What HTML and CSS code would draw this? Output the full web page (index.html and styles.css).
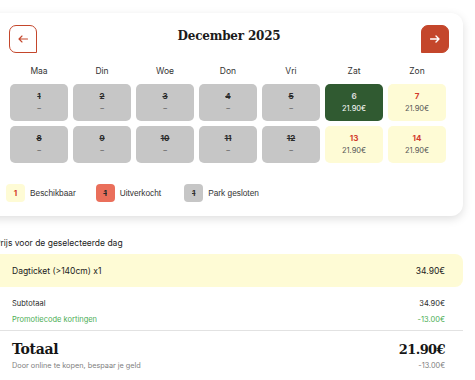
FILE: index.html
```html
<!DOCTYPE html>
<html lang="nl">
<head>
<meta charset="utf-8">
<title>Kalender</title>
<link rel="stylesheet" href="styles.css">
</head>
<body>
<div class="page">
  <section class="card">
    <header class="cal-head">
      <button class="nav prev" aria-label="Vorige maand">
        <svg width="10" height="8" viewBox="0 0 10 8"><path d="M9.5 4H1M4 1L1 4l3 3" fill="none" stroke="currentColor" stroke-width="1.1" stroke-linecap="round" stroke-linejoin="round"/></svg>
      </button>
      <h2 class="month">December 2025</h2>
      <button class="nav next" aria-label="Volgende maand">
        <svg width="10" height="8" viewBox="0 0 10 8"><path d="M0.5 4H9M6 1l3 3-3 3" fill="none" stroke="currentColor" stroke-width="1.4" stroke-linecap="round" stroke-linejoin="round"/></svg>
      </button>
    </header>
    <div class="grid">
      <div class="wd">Maa</div><div class="wd">Din</div><div class="wd">Woe</div><div class="wd">Don</div><div class="wd">Vri</div><div class="wd">Zat</div><div class="wd">Zon</div>
      <div class="day closed"><span class="num">1</span><span class="val">–</span></div>
      <div class="day closed"><span class="num">2</span><span class="val">–</span></div>
      <div class="day closed"><span class="num">3</span><span class="val">–</span></div>
      <div class="day closed"><span class="num">4</span><span class="val">–</span></div>
      <div class="day closed"><span class="num">5</span><span class="val">–</span></div>
      <div class="day selected"><span class="num">6</span><span class="val">21.90€</span></div>
      <div class="day open"><span class="num">7</span><span class="val">21.90€</span></div>
      <div class="day closed"><span class="num">8</span><span class="val">–</span></div>
      <div class="day closed"><span class="num">9</span><span class="val">–</span></div>
      <div class="day closed"><span class="num">10</span><span class="val">–</span></div>
      <div class="day closed"><span class="num">11</span><span class="val">–</span></div>
      <div class="day closed"><span class="num">12</span><span class="val">–</span></div>
      <div class="day open"><span class="num">13</span><span class="val">21.90€</span></div>
      <div class="day open"><span class="num">14</span><span class="val">21.90€</span></div>
    </div>
    <div class="legend">
      <div class="leg leg-1"><span class="sw sw-open">1</span>Beschikbaar</div>
      <div class="leg leg-2"><span class="sw sw-sold">1</span>Uitverkocht</div>
      <div class="leg leg-3"><span class="sw sw-closed">1</span>Park gesloten</div>
    </div>
  </section>

  <section class="price">
    <p class="price-title">Prijs voor de geselecteerde dag</p>
    <div class="ticket-row"><span>Dagticket (&gt;140cm) x1</span><span>34.90€</span></div>
    <div class="sums">
      <div class="sum-row"><span>Subtotaal</span><span>34.90€</span></div>
      <div class="sum-row green"><span>Promotiecode kortingen</span><span>-13.00€</span></div>
    </div>
    <div class="total">
      <div class="total-row"><span>Totaal</span><span class="total-amt">21.90€</span></div>
      <div class="note-row"><span>Door online te kopen, bespaar je geld</span><span>-13.00€</span></div>
    </div>
  </section>
</div>
</body>
</html>
```

FILE: styles.css
```css
* { box-sizing: border-box; }
html, body { margin: 0; padding: 0; background: #ffffff; }
body {
  font-family: "Inter", "Open Sans", sans-serif;
  color: #2a2a2a;
  overflow: hidden;
}
.page {
  margin-left: -24px;
  width: 487px;
  padding-top: 13px;
}
.card {
  background: #fff;
  border-radius: 0 12px 12px 0;
  box-shadow: 0 3px 10px rgba(0,0,0,0.13);
  padding: 12px 14px 14px 33px;
}
.cal-head {
  display: flex;
  align-items: center;
  justify-content: space-between;
  height: 28px;
}
.nav {
  width: 28px;
  height: 28px;
  padding: 0;
  display: flex;
  align-items: center;
  justify-content: center;
  border: 1px solid #c4462b;
  cursor: pointer;
}
.prev {
  background: #fff;
  color: #c4462b;
  border-radius: 7px 7px 0 7px;
}
.next {
  background: #c4462b;
  color: #fff;
  border-radius: 7px 7px 7px 0;
}
.month {
  margin: 0 0 7px;
  font-family: "DejaVu Serif", serif;
  font-weight: 900;
  font-size: 12px;
  letter-spacing: -0.2px;
  color: #1b1b1b;
}
.grid {
  margin-top: 11px;
  display: grid;
  grid-template-columns: repeat(7, 58px);
  grid-template-rows: 15px 37px 37px;
  column-gap: 5px;
  row-gap: 5px;
  margin-left: 1px;
}
.wd {
  text-align: center;
  font-size: 8.5px;
  line-height: 15px;
  color: #333;
}
.day {
  border-radius: 5px;
  display: flex;
  flex-direction: column;
  align-items: center;
  justify-content: center;
  gap: 3px;
}
.num {
  font-size: 8px;
  font-weight: 700;
  line-height: 10px;
}
.val {
  font-size: 7.5px;
  line-height: 10px;
}
.closed { background: #c6c6c6; color: #2b2b2b; }
.closed .num { text-decoration: line-through; text-decoration-thickness: 0.6px; }
.closed .val { color: #555; }
.selected { background: #305a31; color: #fff; }
.selected .num { color: #d9d9d9; }
.open { background: #fefbd5; }
.open .num { color: #d23a2c; }
.open .val { color: #555; }

.legend {
  margin-top: 21px;
  margin-left: -3px;
  display: flex;
  font-family: "Liberation Sans", Arial, sans-serif;
  font-size: 8.3px;
  color: #333;
}
.leg {
  display: flex;
  align-items: center;
  gap: 5px;
}
.leg-2 { margin-left: 20px; }
.leg-3 { margin-left: 23px; }
.sw {
  width: 19px;
  height: 18px;
  border-radius: 4px;
  display: flex;
  align-items: center;
  justify-content: center;
  font-family: "Inter", sans-serif;
  font-size: 8px;
  font-weight: 700;
}
.sw-open { background: #fefbd5; color: #d23a2c; }
.sw-sold { background: #ea6f5b; color: #2b2b2b; text-decoration: line-through; }
.sw-closed { background: #c6c6c6; color: #333; text-decoration: line-through; }

.price {
  padding-top: 21px;
}
.price-title {
  margin: 0 0 5px 19px;
  font-size: 8.5px;
  line-height: 12px;
  color: #222;
}
.ticket-row {
  display: flex;
  justify-content: space-between;
  align-items: center;
  height: 33px;
  padding: 0 18px 0 36px;
  background: #fefbd5;
  border-radius: 0 8px 8px 0;
  font-size: 8.5px;
  color: #222;
}
.sums {
  padding: 8px 18px 3px 36px;
  border-bottom: 1px solid #e2e2e2;
}
.sum-row {
  display: flex;
  justify-content: space-between;
  align-items: center;
  height: 16px;
  font-size: 7.5px;
  color: #2a2a2a;
}
.sum-row.green { color: #4cae55; }
.total {
  padding: 8px 18px 0 36px;
}
.total-row {
  display: flex;
  justify-content: space-between;
  align-items: center;
  height: 20px;
  font-family: "DejaVu Serif", serif;
  font-weight: 900;
  font-size: 14px;
  letter-spacing: -0.3px;
  color: #151515;
}
.total-amt { font-size: 13px; letter-spacing: -0.6px; }
.note-row {
  display: flex;
  justify-content: space-between;
  align-items: center;
  height: 12px;
  font-size: 7.3px;
  color: #808080;
}
```
